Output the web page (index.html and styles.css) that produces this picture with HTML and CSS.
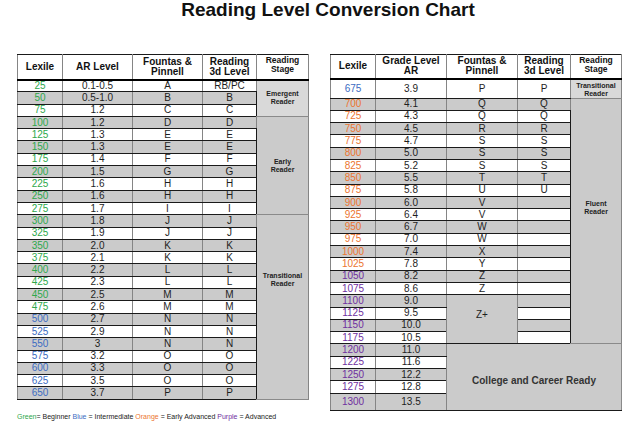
FILE: index.html
```html
<!DOCTYPE html>
<html>
<head>
<meta charset="utf-8">
<link rel="stylesheet" href="styles.css">
</head>
<body>
<h1 class="title">Reading Level Conversion Chart</h1>
<div class="tables">
  <table class="chart left">
    <colgroup><col class="c1"><col class="c2"><col class="c3"><col class="c4"><col class="c5"></colgroup>
    <thead>
      <tr class="head"><th>Lexile</th><th>AR Level</th><th>Fountas &amp;<br>Pinnell</th><th>Reading<br>3d Level</th><th class="sh">Reading<br>Stage</th></tr>
    </thead>
    <tbody>
      <tr><td class="gr">25</td><td>0.1-0.5</td><td>A</td><td>RB/PC</td><td class="stage" rowspan="3">Emergent<br>Reader</td></tr>
      <tr class="g"><td class="gr">50</td><td>0.5-1.0</td><td>B</td><td>B</td></tr>
      <tr><td class="gr">75</td><td>1.2</td><td>C</td><td>C</td></tr>
      <tr class="g"><td class="gr">100</td><td>1.2</td><td>D</td><td>D</td><td class="stage" rowspan="8">Early<br>Reader</td></tr>
      <tr><td class="gr">125</td><td>1.3</td><td>E</td><td>E</td></tr>
      <tr class="g"><td class="gr">150</td><td>1.3</td><td>E</td><td>E</td></tr>
      <tr><td class="gr">175</td><td>1.4</td><td>F</td><td>F</td></tr>
      <tr class="g"><td class="gr">200</td><td>1.5</td><td>G</td><td>G</td></tr>
      <tr><td class="gr">225</td><td>1.6</td><td>H</td><td>H</td></tr>
      <tr class="g"><td class="gr">250</td><td>1.6</td><td>H</td><td>H</td></tr>
      <tr><td class="gr">275</td><td>1.7</td><td>I</td><td>I</td></tr>
      <tr class="g"><td class="gr">300</td><td>1.8</td><td>J</td><td>J</td><td class="stage trans" rowspan="15">Transitional<br>Reader</td></tr>
      <tr><td class="gr">325</td><td>1.9</td><td>J</td><td>J</td></tr>
      <tr class="g"><td class="gr">350</td><td>2.0</td><td>K</td><td>K</td></tr>
      <tr><td class="gr">375</td><td>2.1</td><td>K</td><td>K</td></tr>
      <tr class="g"><td class="gr">400</td><td>2.2</td><td>L</td><td>L</td></tr>
      <tr><td class="gr">425</td><td>2.3</td><td>L</td><td>L</td></tr>
      <tr class="g"><td class="gr">450</td><td>2.5</td><td>M</td><td>M</td></tr>
      <tr><td class="gr">475</td><td>2.6</td><td>M</td><td>M</td></tr>
      <tr class="g"><td class="bl">500</td><td>2.7</td><td>N</td><td>N</td></tr>
      <tr><td class="bl">525</td><td>2.9</td><td>N</td><td>N</td></tr>
      <tr class="g"><td class="bl">550</td><td>3</td><td>N</td><td>N</td></tr>
      <tr><td class="bl">575</td><td>3.2</td><td>O</td><td>O</td></tr>
      <tr class="g"><td class="bl">600</td><td>3.3</td><td>O</td><td>O</td></tr>
      <tr><td class="bl">625</td><td>3.5</td><td>O</td><td>O</td></tr>
      <tr class="g"><td class="bl">650</td><td>3.7</td><td>P</td><td>P</td></tr>
    </tbody>
  </table>

  <table class="chart right">
    <colgroup><col class="d1"><col class="d2"><col class="d3"><col class="d4"><col class="d5"></colgroup>
    <thead>
      <tr class="head"><th>Lexile</th><th>Grade Level<br>AR</th><th>Fountas &amp;<br>Pinnell</th><th>Reading<br>3d Level</th><th class="sh">Reading<br>Stage</th></tr>
    </thead>
    <tbody>
      <tr class="first"><td class="bl">675</td><td>3.9</td><td>P</td><td>P</td><td class="stage small">Transitional<br>Reader</td></tr>
      <tr class="g"><td class="or">700</td><td>4.1</td><td>Q</td><td>Q</td><td class="stage fluent" rowspan="20">Fluent<br>Reader</td></tr>
      <tr><td class="or">725</td><td>4.3</td><td>Q</td><td>Q</td></tr>
      <tr class="g"><td class="or">750</td><td>4.5</td><td>R</td><td>R</td></tr>
      <tr><td class="or">775</td><td>4.7</td><td>S</td><td>S</td></tr>
      <tr class="g"><td class="or">800</td><td>5.0</td><td>S</td><td>S</td></tr>
      <tr><td class="or">825</td><td>5.2</td><td>S</td><td>S</td></tr>
      <tr class="g"><td class="or">850</td><td>5.5</td><td>T</td><td>T</td></tr>
      <tr><td class="or">875</td><td>5.8</td><td>U</td><td>U</td></tr>
      <tr class="g"><td class="or">900</td><td>6.0</td><td>V</td><td></td></tr>
      <tr><td class="or">925</td><td>6.4</td><td>V</td><td></td></tr>
      <tr class="g"><td class="or">950</td><td>6.7</td><td>W</td><td></td></tr>
      <tr><td class="or">975</td><td>7.0</td><td>W</td><td></td></tr>
      <tr class="g"><td class="or">1000</td><td>7.4</td><td>X</td><td></td></tr>
      <tr><td class="or">1025</td><td>7.8</td><td>Y</td><td></td></tr>
      <tr class="g"><td class="pu">1050</td><td>8.2</td><td>Z</td><td></td></tr>
      <tr><td class="pu">1075</td><td>8.6</td><td>Z</td><td></td></tr>
      <tr class="g"><td class="pu">1100</td><td>9.0</td><td class="zplus" rowspan="4">Z+</td><td></td></tr>
      <tr><td class="pu">1125</td><td>9.5</td><td></td></tr>
      <tr class="g"><td class="pu">1150</td><td>10.0</td><td></td></tr>
      <tr><td class="pu">1175</td><td>10.5</td><td></td></tr>
      <tr class="g"><td class="pu">1200</td><td>11.0</td><td class="college" colspan="3" rowspan="5">College and Career Ready</td></tr>
      <tr><td class="pu">1225</td><td>11.6</td></tr>
      <tr class="g"><td class="pu">1250</td><td>12.2</td></tr>
      <tr><td class="pu">1275</td><td>12.8</td></tr>
      <tr class="g last"><td class="pu">1300</td><td>13.5</td></tr>
    </tbody>
  </table>
</div>
<p class="legend"><span class="gr">Green</span>= Beginner <span class="bl">Blue</span> = Intermediate <span class="or">Orange</span> = Early Advanced <span class="pu">Purple</span> = Advanced</p>
</body>
</html>
```

FILE: styles.css
```css
html, body {
  margin: 0;
  padding: 0;
  background: #ffffff;
}
body {
  width: 640px;
  height: 427px;
  overflow: hidden;
  font-family: "Liberation Sans", Arial, sans-serif;
  color: #1e1e1e;
}
.title {
  margin: 0;
  padding-left: 16px;
  height: 54px;
  font-size: 19px;
  line-height: 19px;
  font-weight: bold;
  text-align: center;
  color: #111;
}
.tables {
  display: flex;
  align-items: flex-start;
  gap: 21px;
  padding-left: 17px;
}
.chart {
  border-collapse: collapse;
  table-layout: fixed;
  width: 291px;
  font-size: 10px;
  line-height: 10px;
  border-top: 1px solid #000;
  border-left: 1px solid #000;
  border-right: 1px solid #8a8a8a;
  border-bottom: 1px solid #222;
}
.c1 { width: 45px; }
.c2 { width: 70px; }
.c3 { width: 70px; }
.c4 { width: 54px; }
.c5 { width: 52px; }
.d1 { width: 45px; }
.d2 { width: 71px; }
.d3 { width: 71px; }
.d4 { width: 53px; }
.d5 { width: 51px; }

.chart th, .chart td {
  padding: 0;
  text-align: center;
  vertical-align: middle;
  border-left: 1px solid #858585;
  border-right: 1px solid #858585;
  border-top: 1px solid #1a1a1a;
  border-bottom: 1px solid #1a1a1a;
  overflow: hidden;
  white-space: nowrap;
}
.chart th {
  font-weight: bold;
  font-size: 10px;
  line-height: 10px;
  color: #111;
  background: #fff;
  border-bottom: 2px solid #000;
}
.chart th.sh {
  vertical-align: top;
  font-size: 8.5px;
  line-height: 8.5px;
  padding-top: 1px;
}
.left .head { height: 25px; }
.right .head { height: 24px; }
.chart tbody tr { height: 12.3px; }
.right tr.first { height: 18px; }
.right tr.last { height: 17px; }

.chart tr.g td { background: #cbcbcb; }
.chart td { background: #fff; }

.chart td.stage {
  background: #d9d9d9;
  font-weight: bold;
  font-size: 7px;
  line-height: 8px;
  color: #222;
  border-left: 1px solid #1a1a1a;
  border-top: 1px solid #8a8a8a;
  border-bottom: 1px solid #8a8a8a;
}
.chart td.trans {
  vertical-align: top;
  padding-top: 57px;
}
.chart td.fluent {
  vertical-align: top;
  padding-top: 101px;
}
.chart td.small {
  vertical-align: top;
  padding-top: 2px;
}
.chart td.zplus {
  background: #cbcbcb;
  padding-bottom: 8px;
}
.chart td.college {
  background: #cbcbcb;
  font-weight: bold;
  font-size: 10px;
  color: #333;
  padding-top: 7px;
  border-right: 1px solid #8a8a8a;
}

.gr { color: #2ea84c; }
.bl { color: #3c6cc2; }
.or { color: #ec7530; }
.pu { color: #7030a0; }

.legend {
  margin: 0;
  padding: 2px 0 0 17px;
  font-size: 7px;
  line-height: 8px;
  color: #222;
  white-space: nowrap;
}
```
